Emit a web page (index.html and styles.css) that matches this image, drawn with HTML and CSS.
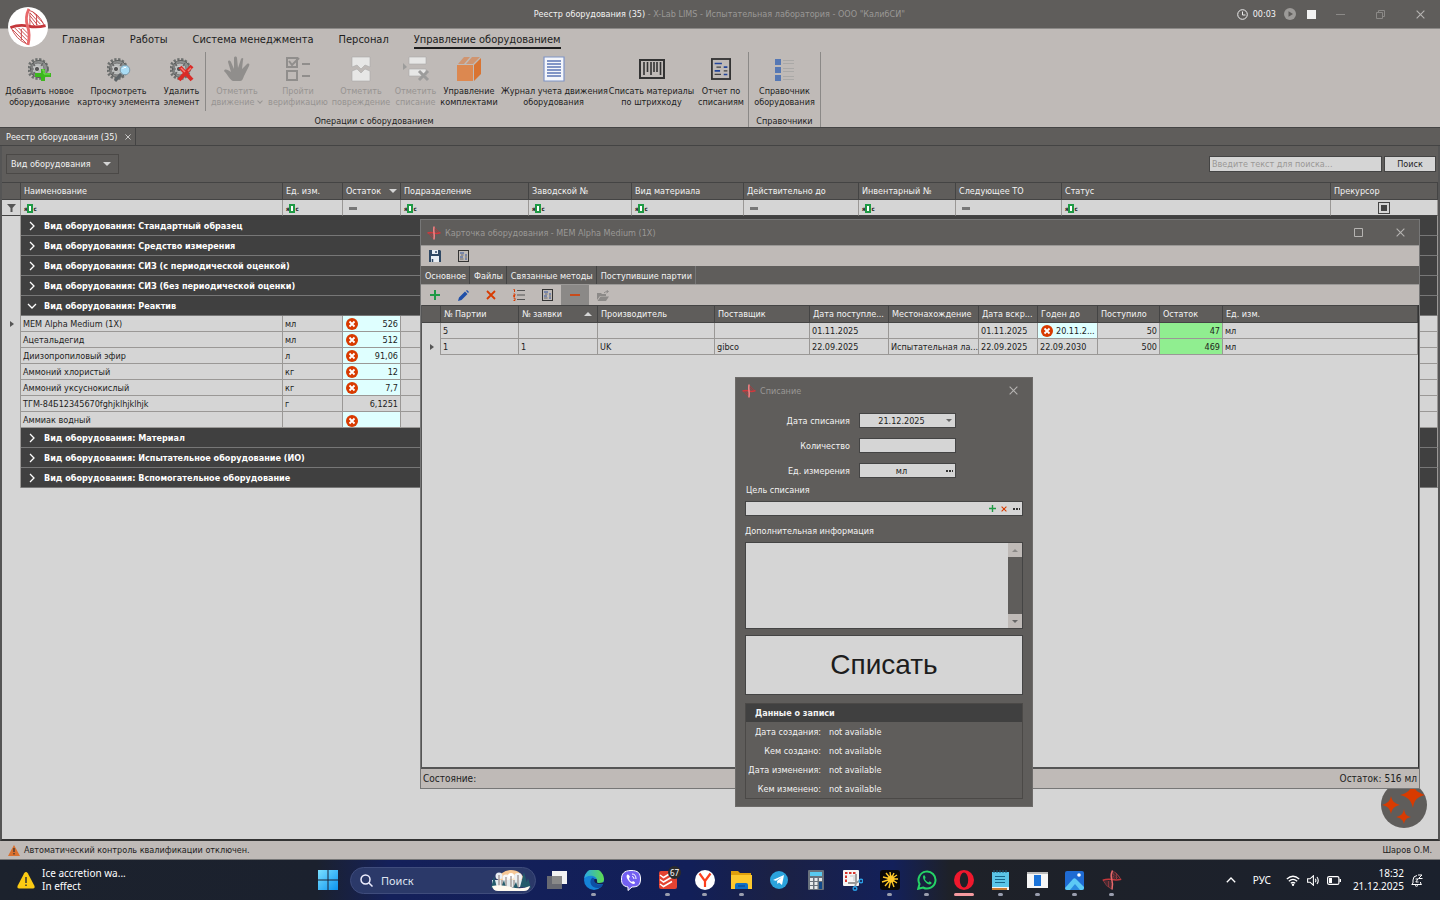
FILE: index.html
```html
<!DOCTYPE html>
<html lang="ru">
<head>
  <meta charset="UTF-8"/>
  <meta name="viewport" content="width=device-width, initial-scale=1.0"/>
  <title>Реестр оборудования (35) - X-Lab LIMS</title>
  <link rel="stylesheet" href="styles.css">
</head>
<body>

  <!-- Shared icons -->
  <svg class="sprite" aria-hidden="true">
    <symbol id="dna" viewBox="0 0 40 40">
      <path d="M20 2Q31 5 37 18M22 5V18M22 5 33 17M22 8 30 18M22 12 27 19M25 4 36 16M29 7V18M2 20Q7 33 19 38M6 21 20 35M10 21 20 31M14 21 20 27M4 23 18 37M13 22V34" stroke="#c9474a" stroke-width="1" fill="none"/>
      <path d="M1.500 20.500Q11 17 20 19T38.500 18.500" fill="none" stroke="#c4373b" stroke-width="3"/>
      <path d="M21 1Q16.500 10 19.500 19T20 39" fill="none" stroke="#e8696b" stroke-width="3"/>
    </symbol>
    <symbol id="dna-small" viewBox="0 0 14 14">
      <path d="M7 1 13 7M8 4 11 7M1 7 7 13M3 7 6 10" stroke="#b0393c" stroke-width=".8" fill="none"/>
      <path d="M.5 7Q4 6 7 7T13.500 6.500" fill="none" stroke="#d0393d" stroke-width="1.500"/>
      <path d="M7 .5Q6.500 4 7 7T7 13.500" fill="none" stroke="#f08082" stroke-width="1.600"/>
    </symbol>
    <symbol id="gear" viewBox="0 0 24 26">
      <circle cx="10" cy="13" r="9.5" fill="none" stroke="#6c6f6e" stroke-width="3" stroke-dasharray="2.2 1.6"/>
      <circle cx="11" cy="13" r="8.6" fill="#8d908f" stroke="#5e6160"/>
      <circle cx="10" cy="13" r="6" fill="#b9bcbb" stroke="#777" stroke-width="1"/>
      <circle cx="9" cy="13" r="2.6" fill="#555" stroke="#ddd" stroke-width=".8"/>
      <path d="M5 7 7 10M15 7 13 10M5 19 7 16M3 13H6" stroke="#666" stroke-width="1.2"/>
    </symbol>
    <symbol id="err" viewBox="0 0 12 12">
      <circle cx="6" cy="6" r="6" fill="#d83b01"/>
      <path d="M3.5 3.5 8.5 8.5M8.5 3.5 3.5 8.5" stroke="#fff" stroke-width="1.8"/>
    </symbol>
    <symbol id="report" viewBox="0 0 22 24">
      <rect x="1" y="1" width="20" height="22" fill="none" stroke="#333" stroke-width="2"/>
      <path d="M4 6H12M14 10H18M4 14H10M14 18H18" stroke="#23459a" stroke-width="1.8"/>
      <path d="M6 10H11M14 14H18M4 18H11" stroke="#444" stroke-width="1.4"/>
    </symbol>
    <symbol id="close" viewBox="0 0 10 10"><path d="M.7.7 9.3 9.3M9.3.7.7 9.3" stroke="currentColor" stroke-width="1.2" fill="none"/></symbol>
    <symbol id="right" viewBox="0 0 10 10"><path d="M3 1 7 5 3 9" stroke="#fff" stroke-width="1.3" fill="none"/></symbol>
    <symbol id="down" viewBox="0 0 10 10"><path d="M1 3 5 7 9 3" stroke="#fff" stroke-width="1.3" fill="none"/></symbol>
    <symbol id="plus" viewBox="0 0 10 10"><path d="M5 0V10M0 5H10" stroke="#1f9a45" stroke-width="2"/></symbol>
    <symbol id="cross" viewBox="0 0 10 10"><path d="M1 1 9 9M9 1 1 9" stroke="#d83b01" stroke-width="1.8"/></symbol>
  </svg>

  <header class="titlebar">
    <span class="title"><b>Реестр оборудования (35)</b> - X-Lab LIMS - Испытательная лаборатория - ООО "КалибСИ"</span>
    <div class="timer">
      <svg width="11" height="11" viewBox="0 0 11 11"><circle cx="5.5" cy="5.5" r="4.8" fill="none" stroke="#eee"/><path d="M5.500 2.500V6H8.500" fill="none" stroke="#eee"/></svg>
      <span>00:03</span>
      <button aria-label="Старт"><svg width="12" height="12" viewBox="0 0 12 12"><circle cx="6" cy="6" r="6" fill="#9c9a98"/><path d="M4.500 3.200 9 6 4.500 8.800Z" fill="#5f5d5b"/></svg></button>
      <button aria-label="Стоп"><svg width="9" height="9" viewBox="0 0 9 9"><path d="M0 0H9V9H0Z" fill="#f3f3f3"/></svg></button>
    </div>
    <div class="winbtns">
      <button aria-label="Свернуть"><svg width="9" height="9" viewBox="0 0 9 9"><path d="M0 4.500H9" stroke="#8b8987"/></svg></button>
      <button aria-label="Развернуть"><svg width="9" height="9" viewBox="0 0 9 9"><path d="M.5 2.500H6.500V8.500H.5ZM2.500 2.500V.5H8.500V6.500H6.500" fill="none" stroke="#8b8987"/></svg></button>
      <button aria-label="Закрыть"><svg width="9" height="9"><use href="#close"/></svg></button>
    </div>
    <div class="logo"><svg width="38" height="38"><use href="#dna"/></svg></div>
  </header>

  <nav class="tabs">
    <a href="#">Главная</a>
    <a href="#">Работы</a>
    <a href="#">Система менеджмента</a>
    <a href="#">Персонал</a>
    <a href="#" class="active">Управление оборудованием</a>
  </nav>

  <section class="ribbon">
    <div class="group">
      <div class="items">
        <button class="item w-add">
          <svg width="24" height="26" viewBox="0 0 24 26"><use href="#gear"/><path d="M13 13H17V17H23V21H17V25H13V21H7V17H13Z" fill="#3db81e"/><path d="M14 14H16V18H22" stroke="#7de05a" fill="none"/></svg>
          Добавить новое<br>оборудование
        </button>
        <button class="item w-view">
          <svg width="24" height="26" viewBox="0 0 24 26"><use href="#gear"/><path d="M14 18 8 25" stroke="#5d6468" stroke-width="3"/><circle cx="18" cy="14" r="4.800" fill="#a9dcf4" stroke="#7f9aa8"/><path d="M15.500 13A3 3 0 0 1 19 11.500" stroke="#fff" fill="none"/></svg>
          Просмотреть<br>карточку элемента
        </button>
        <button class="item w-del">
          <svg width="24" height="26" viewBox="0 0 24 26"><use href="#gear"/><path d="M10 11 22 24M22 10 9 24" stroke="#d92b27" stroke-width="4"/><path d="M11 12 15 16M21 12 18 15" stroke="#f57a72" stroke-width="1.500"/></svg>
          Удалить<br>элемент
        </button>
        <span class="sep"></span>
        <button class="item w-move" disabled>
          <svg width="28" height="26" viewBox="0 0 28 26"><path d="M10 25C7 24 5 19 1 15 2 12 5 14 8 16L5 6C5 4 7 4 8 6L11 13 11 2C11 0 14 0 14 2L15 12 18 3C19 1 21 2 20 4L19 13 24 8C26 7 27 8 26 10L21 20C20 23 19 25 17 25Z" fill="#8c8a88"/></svg>
          Отметить<br>движение <i class="chev"></i>
        </button>
        <button class="item w-ver" disabled>
          <svg width="26" height="26" viewBox="0 0 26 26"><path d="M2 2H12V11H2ZM2 15H12V24H2Z" fill="none" stroke="#8c8a88" stroke-width="2"/><path d="M4 5 7 9 14 2M17 8H25M17 20H25" fill="none" stroke="#8c8a88" stroke-width="2"/></svg>
          Пройти<br>верификацию
        </button>
        <button class="item w-dmg" disabled>
          <svg width="22" height="26" viewBox="0 0 22 26"><path d="M2 1H20V11L15 9 11 13 7 9 2 11Z" fill="#ececec" stroke="#aaa" stroke-width=".6"/><path d="M2 25H20V15L15 13 11 17 7 13 2 15Z" fill="#ececec" stroke="#aaa" stroke-width=".6"/></svg>
          Отметить<br>повреждение
        </button>
        <button class="item w-off" disabled>
          <svg width="28" height="26" viewBox="0 0 28 26"><path d="M7 1H24V8H7ZM7 13H24V20H7Z" fill="#ececec" stroke="#aaa" stroke-width=".6"/><path d="M1 7 5 11 1 14Z" fill="#999"/><path d="M17 15 26 24M26 15 17 24" stroke="#999" stroke-width="3"/></svg>
          Отметить<br>списание
        </button>
        <button class="item w-kit">
          <svg width="26" height="26" viewBox="0 0 26 26"><path d="M1 9H17V25H1Z" fill="#dc8850"/><path d="M18 9 25 2V18L18 25Z" fill="#d97432"/><path d="M2 8 8 1H14L8 8ZM10 8 16 1H24L17 8Z" fill="#d09570"/></svg>
          Управление<br>комплектами
        </button>
        <button class="item w-log">
          <svg width="22" height="26" viewBox="0 0 22 26"><path d="M1 1H21V25H1Z" fill="#f4f6fb" stroke="#7f93c6" stroke-width="1.200"/><path d="M4 5H18M4 8H18M4 11H18M4 14H18M4 17H18M4 20H18" stroke="#5b76b5" stroke-width="1.500"/></svg>
          Журнал учета движения<br>оборудования
        </button>
        <button class="item w-bar">
          <svg width="26" height="26" viewBox="0 0 26 26"><path d="M1 4H25V22H1Z" fill="none" stroke="#333" stroke-width="2"/><path d="M5 6V19M8.500 6V16M12 6V19M15 6V16M18 6V16M21.500 6V19" stroke="#333" stroke-width="1.600"/></svg>
          Списать материалы<br>по штрихкоду
        </button>
        <button class="item w-rep">
          <svg width="20" height="26" viewBox="0 -1 22 26"><use href="#report" width="22" height="24"/></svg>
          Отчет по<br>списаниям
        </button>
      </div>
      <div class="caption">Операции с оборудованием</div>
    </div>
    <div class="group">
      <div class="items">
        <button class="item w-ref">
          <svg width="20" height="26" viewBox="0 0 20 26"><path d="M0 3H6V9H0ZM0 11H6V17H0ZM0 19H6V25H0Z" fill="#5678b4"/><path d="M8 4.500H19M8 7.500H19M8 12.500H19M8 15.500H19M8 20.500H19M8 23.500H19" stroke="#aaa9a7"/></svg>
          Справочник<br>оборудования
        </button>
      </div>
      <div class="caption">Справочники</div>
    </div>
  </section>

  <div class="doctabs">
    <div class="doctab">Реестр оборудования (35) <button aria-label="Закрыть вкладку"><svg width="6" height="6"><use href="#close"/></svg></button></div>
  </div>

  <main class="registry">
    <div class="searchbar">
      <select class="kind" aria-label="Группировка"><option>Вид оборудования</option></select>
      <input class="find" type="text" placeholder="Введите текст для поиска..." aria-label="Поиск">
      <button class="go">Поиск</button>
    </div>

    <table class="grid main-grid">
      <colgroup>
        <col class="c19"><col class="c262"><col class="c60"><col class="c58"><col class="c128"><col class="c103">
        <col class="c112"><col class="c115"><col class="c97"><col class="c106"><col><col class="c107">
      </colgroup>
      <thead>
        <tr>
          <th></th><th>Наименование</th><th>Ед. изм.</th><th>Остаток <i class="tri"></i></th><th>Подразделение</th><th>Заводской №</th>
          <th>Вид материала</th><th>Действительно до</th><th>Инвентарный №</th><th>Следующее ТО</th><th>Статус</th><th>Прекурсор</th>
        </tr>
        <tr class="filter">
          <td class="mark"><svg width="9" height="8" viewBox="0 0 9 8"><path d="M0 0H9L5.500 4V8H3.500V4Z" fill="#555"/></svg></td>
          <td><span class="abc">я<i></i>с</span></td>
          <td><span class="abc">я<i></i>с</span></td>
          <td><span class="eq"></span></td>
          <td><span class="abc">я<i></i>с</span></td>
          <td><span class="abc">я<i></i>с</span></td>
          <td><span class="abc">я<i></i>с</span></td>
          <td><span class="eq"></span></td>
          <td><span class="abc">я<i></i>с</span></td>
          <td><span class="eq"></span></td>
          <td><span class="abc">я<i></i>с</span></td>
          <td class="mid"><input type="checkbox" class="tri-check" aria-label="Прекурсор"></td>
        </tr>
      </thead>
      <tbody>
        <tr class="grp"><td></td><td colspan="11"><svg width="10" height="10"><use href="#right"/></svg>Вид оборудования: Стандартный образец</td></tr>
        <tr class="grp"><td></td><td colspan="11"><svg width="10" height="10"><use href="#right"/></svg>Вид оборудования: Средство измерения</td></tr>
        <tr class="grp"><td></td><td colspan="11"><svg width="10" height="10"><use href="#right"/></svg>Вид оборудования: СИЗ (с периодической оценкой)</td></tr>
        <tr class="grp"><td></td><td colspan="11"><svg width="10" height="10"><use href="#right"/></svg>Вид оборудования: СИЗ (без периодической оценки)</td></tr>
        <tr class="grp"><td></td><td colspan="11"><svg width="10" height="10"><use href="#down"/></svg>Вид оборудования: Реактив</td></tr>
        <tr><td class="mark"><i class="cur"></i></td><td>MEM Alpha Medium (1X)</td><td>мл</td><td class="num low"><svg width="12" height="12"><use href="#err"/></svg>526</td><td></td><td></td><td></td><td></td><td></td><td></td><td></td><td></td></tr>
        <tr><td></td><td>Ацетальдегид</td><td>мл</td><td class="num low"><svg width="12" height="12"><use href="#err"/></svg>512</td><td></td><td></td><td></td><td></td><td></td><td></td><td></td><td></td></tr>
        <tr><td></td><td>Диизопропиловый эфир</td><td>л</td><td class="num low"><svg width="12" height="12"><use href="#err"/></svg>91,06</td><td></td><td></td><td></td><td></td><td></td><td></td><td></td><td></td></tr>
        <tr><td></td><td>Аммоний хлористый</td><td>кг</td><td class="num low"><svg width="12" height="12"><use href="#err"/></svg>12</td><td></td><td></td><td></td><td></td><td></td><td></td><td></td><td></td></tr>
        <tr><td></td><td>Аммоний уксуснокислый</td><td>кг</td><td class="num low"><svg width="12" height="12"><use href="#err"/></svg>7,7</td><td></td><td></td><td></td><td></td><td></td><td></td><td></td><td></td></tr>
        <tr><td></td><td>ТГМ-84Б12345670fghjklhjklhjk</td><td>г</td><td class="num">6,1251</td><td></td><td></td><td></td><td></td><td></td><td></td><td></td><td></td></tr>
        <tr><td></td><td>Аммиак водный</td><td></td><td class="num low"><svg width="12" height="12"><use href="#err"/></svg></td><td></td><td></td><td></td><td></td><td></td><td></td><td></td><td></td></tr>
        <tr class="grp"><td></td><td colspan="11"><svg width="10" height="10"><use href="#right"/></svg>Вид оборудования: Материал</td></tr>
        <tr class="grp"><td></td><td colspan="11"><svg width="10" height="10"><use href="#right"/></svg>Вид оборудования: Испытательное оборудование (ИО)</td></tr>
        <tr class="grp"><td></td><td colspan="11"><svg width="10" height="10"><use href="#right"/></svg>Вид оборудования: Вспомогательное оборудование</td></tr>
      </tbody>
    </table>

    <button class="assist" aria-label="Помощник">
      <svg width="46" height="46" viewBox="0 0 46 46"><path d="M32 0C33 8 36 10 44 13 36 15 33 18 32 26 30 18 27 15 19 13 27 11 30 8 32 0ZM10 14C11 19 13 21 19 23 13 24 11 27 10 32 9 27 7 24 1 23 7 21 9 19 10 14ZM23 27C24 32 25 34 30 35 25 36 24 38 23 42 22 38 20 36 15 35 20 34 22 32 23 27Z" fill="#d83b01"/></svg>
    </button>
  </main>

  <footer class="statusbar">
    <svg width="12" height="11" viewBox="0 0 12 11"><path d="M6 0 12 11H0Z" fill="#d9702f"/><path d="M6 3V7M6 8V9.500" stroke="#333" stroke-width="1.200"/></svg>
    <span>Автоматический контроль квалификации отключен.</span>
    <span class="user">Шаров О.М.</span>
  </footer>

  <!-- Equipment card window -->
  <section class="window card">
    <div class="wintitle">
      <svg width="14" height="14"><use href="#dna-small"/></svg>
      <span>Карточка оборудования - MEM Alpha Medium (1X)</span>
      <button aria-label="Развернуть"><svg width="9" height="9" viewBox="0 0 9 9"><path d="M.5.5H8.500V8.500H.5Z" fill="none" stroke="currentColor"/></svg></button>
      <button aria-label="Закрыть"><svg width="9" height="9"><use href="#close"/></svg></button>
    </div>
    <div class="toolbar top">
      <button aria-label="Сохранить"><svg width="12" height="12" viewBox="0 0 12 12"><path d="M0 0H11L12 1V12H0Z" fill="#2f4864"/><path d="M3 0H9V4H3ZM2 6H10V12H2Z" fill="#e9eef4"/><path d="M7 1V3M3.500 9V12" stroke="#2f4864" stroke-width="1.500"/></svg></button>
      <button aria-label="Отчет"><svg width="11" height="12"><use href="#report"/></svg></button>
    </div>
    <div class="cardtabs">
      <button>Основное</button><button>Файлы</button><button>Связанные методы</button><button class="active">Поступившие партии</button>
    </div>
    <div class="toolbar">
      <button aria-label="Добавить"><svg width="10" height="10"><use href="#plus"/></svg></button>
      <button aria-label="Изменить"><svg width="11" height="11" viewBox="0 0 11 11"><path d="M0 11 1 7.500 7 1.500 9.500 4 3.500 10ZM8 .8 9 0 11 2 10 3Z" fill="#1f4fa8"/></svg></button>
      <button aria-label="Удалить"><svg width="10" height="10"><use href="#cross"/></svg></button>
      <button aria-label="Нумерация"><svg width="12" height="12" viewBox="0 0 12 12"><path d="M4 1.500H12M4 6H12M4 10.500H12" stroke="#555"/><path d="M.5.500H1.500V3M.5 5H2V6.500H.5V7.500H2M.5 9H2V11.500H.5" fill="none" stroke="#d83b01"/></svg></button>
      <button aria-label="Отчет"><svg width="11" height="12"><use href="#report"/></svg></button>
      <button class="pressed" aria-label="Списать"><svg width="12" height="12" viewBox="0 0 12 12"><path d="M1 6H11" stroke="#d83b01" stroke-width="1.600"/></svg></button>
      <button disabled aria-label="Открыть"><svg width="13" height="11" viewBox="0 0 13 11"><path d="M0 3H4L5 4H9V6H3L0 10ZM3.500 6.500H12L9 11H.5Z" fill="#8c8a88"/><path d="M7 3Q8 1.500 11 1.500M9.500 0 11.500 1.500 9.500 3" fill="none" stroke="#8c8a88"/></svg></button>
    </div>
    <div class="sheet">
      <table class="grid">
        <colgroup>
          <col class="c19"><col class="c78"><col class="c79"><col class="c117"><col class="c95"><col class="c79"><col class="c90">
          <col class="c59"><col class="c60"><col class="c62"><col class="c63"><col>
        </colgroup>
        <thead>
          <tr>
            <th></th><th>№ Партии</th><th>№ заявки <i class="tri up"></i></th><th>Производитель</th><th>Поставщик</th><th>Дата поступле...</th><th>Местонахождение</th>
            <th>Дата вскр...</th><th>Годен до</th><th>Поступило</th><th>Остаток</th><th>Ед. изм.</th>
          </tr>
        </thead>
        <tbody>
          <tr><td></td><td>5</td><td></td><td></td><td></td><td>01.11.2025</td><td></td><td>01.11.2025</td><td class="low"><svg width="12" height="12"><use href="#err"/></svg>20.11.2...</td><td class="num">50</td><td class="num rest">47</td><td>мл</td></tr>
          <tr><td class="mark"><i class="cur"></i></td><td>1</td><td>1</td><td>UK</td><td>gibco</td><td>22.09.2025</td><td>Испытательная ла...</td><td>22.09.2025</td><td>22.09.2030</td><td class="num">500</td><td class="num rest">469</td><td>мл</td></tr>
        </tbody>
      </table>
    </div>
    <div class="cardstatus"><span>Состояние:</span><span>Остаток: 516 мл</span></div>
  </section>

  <!-- Write-off dialog -->
  <form class="window dialog">
    <div class="wintitle">
      <svg width="14" height="14"><use href="#dna-small"/></svg>
      <span>Списание</span>
      <button type="button" aria-label="Закрыть"><svg width="9" height="9"><use href="#close"/></svg></button>
    </div>
    <div class="fields">
      <label for="date">Дата списания</label>
      <div class="box"><input id="date" type="text" value="21.12.2025"><button type="button" aria-label="Календарь"><i class="tri small"></i></button></div>
      <label for="qty">Количество</label>
      <div class="box"><input id="qty" type="text"></div>
      <label for="unit">Ед. измерения</label>
      <div class="box"><input id="unit" type="text" value="мл"><button type="button" aria-label="Выбрать"><i class="dots"></i></button></div>
    </div>
    <label class="above" for="goal">Цель списания</label>
    <div class="box goal">
      <input id="goal" type="text">
      <button type="button" aria-label="Добавить"><svg width="7" height="7"><use href="#plus"/></svg></button>
      <button type="button" aria-label="Очистить"><svg width="6" height="6"><use href="#cross"/></svg></button>
      <button type="button" aria-label="Выбрать"><i class="dots"></i></button>
    </div>
    <label class="above info" for="info">Дополнительная информация</label>
    <div class="memo">
      <textarea id="info"></textarea>
      <div class="scroll">
        <button type="button" aria-label="Вверх"><i class="tri small up"></i></button>
        <button type="button" aria-label="Вниз"><i class="tri small"></i></button>
      </div>
    </div>
    <button type="button" class="submit">Списать</button>
    <div class="record">
      <h2>Данные о записи</h2>
      <dl>
        <dt>Дата создания:</dt><dd>not available</dd>
        <dt>Кем создано:</dt><dd>not available</dd>
        <dt>Дата изменения:</dt><dd>not available</dd>
        <dt>Кем изменено:</dt><dd>not available</dd>
      </dl>
    </div>
  </form>

  <!-- Taskbar -->
  <div class="taskbar">
    <div class="weather">
      <svg width="18" height="17" viewBox="0 0 18 17"><path d="M9 0Q10 0 10.800 1.200L17.500 14Q18 16.500 16 16.500H2Q0 16.500.5 14L7.200 1.200Q8 0 9 0Z" fill="#fccb13"/><path d="M9 5V11M9 12.500V14" stroke="#333" stroke-width="1.500"/></svg>
      <div><b>Ice accretion wa...</b><span>In effect</span></div>
    </div>
    <div class="apps">
      <button aria-label="Пуск"><svg width="20" height="20" viewBox="0 0 20 20"><defs><linearGradient id="win" x2="1" y2="1"><stop stop-color="#7be0ff"/><stop offset="1" stop-color="#0a93f0"/></linearGradient></defs><path d="M0 0H9.500V9.500H0ZM10.500 0H20V9.500H10.500ZM0 10.500H9.500V20H0ZM10.500 10.500H20V20H10.500Z" fill="url(#win)"/></svg></button>
      <label class="search">
        <svg width="13" height="13" viewBox="0 0 13 13"><circle cx="5.500" cy="5.500" r="4.500" fill="none" stroke="#eef" stroke-width="1.500"/><path d="M9 9 12.500 12.500" stroke="#eef" stroke-width="1.500"/></svg>
        <input type="text" placeholder="Поиск" aria-label="Поиск">
        <svg width="40" height="23" viewBox="0 0 40 23"><path d="M7 12A13 11 0 0 1 33 12V17H7Z" fill="#f6c795"/><circle cx="20" cy="11" r="6" fill="#fce7cb"/><circle cx="8" cy="7" r="3.500" fill="#e9eef3"/><circle cx="15" cy="9" r="3.500" fill="#f6f6f6"/><circle cx="20" cy="7" r="3" fill="#fff"/><circle cx="27" cy="8" r="4" fill="#eef1f4"/><path d="M1 11H32V18H1Z" fill="#e3ebee"/><path d="M8 19V6M15 19V8M20 19V7M27 19V6M11 19V11M23 19V11" stroke="#857775" stroke-width="1"/><path d="M3 7 6 19H0ZM13 11 15 19H10ZM33 3 37 18H29ZM37 9 40 19H34ZM25 13 27 19H22Z" fill="#235b6b"/><path d="M1 17Q10 15 20 18T39 17Q38 22 33 22H7Q2 22 1 17Z" fill="#fffaf0"/></svg>
      </label>
      <button aria-label="Представление задач"><svg width="20" height="20" viewBox="0 0 20 20"><path d="M5 1H20V14H5Z" fill="#f2f2f2"/><path d="M0 6H15V19H0Z" fill="#777" opacity=".85"/></svg></button>
      <button class="run" aria-label="Edge"><svg width="20" height="20" viewBox="0 0 20 20"><defs><linearGradient id="edge" x2="1"><stop stop-color="#29a8e8"/><stop offset="1" stop-color="#5fdc4c"/></linearGradient></defs><circle cx="10" cy="10" r="10" fill="#1583d8"/><path d="M0 9A10 10 0 0 1 20 9C20 13 16 15 12 13 14 11 13 7 9 6 5 5 1 7 0 9Z" fill="url(#edge)"/><path d="M8 8C4 12 8 19 15 18 18 17 19 14 19 14 15 16 11 14 12 11 11 9 9 7 8 8Z" fill="#0d4fa5"/><path d="M10.500 9C9 12 13 15.500 18.500 14L21 16V12L15.500 13C11.500 13 14 11 12.500 9Z" fill="#151f52"/></svg></button>
      <button aria-label="Viber"><svg width="20" height="21" viewBox="0 0 20 21"><path d="M10 .5C17 .5 19.500 3 19.500 9S17 17 11 17L7 20.500V17C2 16 .5 14 .5 9S3 .5 10 .5Z" fill="#7360f2" stroke="#fff"/><path d="M6 5C4 7 9 14 13 14 15 13 14 12 12 11L11 12C9 11 8 10 8 8L9 7C8 5 7 4 6 5Z" fill="#fff"/><path d="M11 4Q15 4 15 9M11 6.500Q13 6.500 13 9" stroke="#fff" fill="none"/></svg></button>
      <button class="run" aria-label="Todoist"><svg width="18" height="18" viewBox="0 0 18 18"><rect width="18" height="18" rx="2" fill="#e44332"/><path d="M1 4 4.500 6.500 12 2M1 8.500 4.500 11 13 6M1 13 4.500 15.500 13 10.500" stroke="#fff" stroke-width="1.500" fill="none"/></svg><span class="badge">67</span></button>
      <button class="run" aria-label="Yandex"><svg width="20" height="20" viewBox="0 0 20 20"><circle cx="10" cy="10" r="10" fill="#fff"/><path d="M4.500 3.500 10 11V17M15.500 3.500 10 11" stroke="#fc3f1d" stroke-width="2.200" fill="none"/></svg></button>
      <button class="run" aria-label="Проводник"><svg width="21" height="20" viewBox="0 0 21 20"><path d="M0 1H7L9 3H20V8H0Z" fill="#e0a00c"/><path d="M0 5H21V19H0Z" fill="#fdc92e"/><path d="M4 19V15Q4 13 6 13H15Q17 13 17 15V19Z" fill="#0f6fc5"/><path d="M7 16H14" stroke="#073f86"/></svg></button>
      <button aria-label="Telegram"><svg width="18" height="18" viewBox="0 0 18 18"><circle cx="9" cy="9" r="9" fill="#2ba3dc"/><path d="M3 9 14 4 12 14 9 11.500 7.500 13 7 10 12 6 6 9.800Z" fill="#fff"/></svg></button>
      <button aria-label="Калькулятор"><svg width="16" height="20" viewBox="0 0 16 20"><rect width="16" height="20" rx="1" fill="#68717c"/><path d="M2 2H14V6H2Z" fill="#58c9ef"/><path d="M2 8H5V11H2ZM6.500 8H9.500V11H6.500ZM2 12H5V15H2ZM6.500 12H9.500V15H6.500ZM2 16H5V19H2ZM6.500 16H9.500V19H6.500ZM11 8H14V11H11Z" fill="#e6e9ec"/><path d="M11 12H14V19H11Z" fill="#124a8c"/></svg></button>
      <button aria-label="Ножницы"><svg width="20" height="21" viewBox="0 0 20 21"><rect width="16" height="16" rx="1" fill="#f5f5f5"/><path d="M3 12V3H13" stroke="#d8322a" stroke-width="2" stroke-dasharray="2.500 1.500" fill="none"/><path d="M7 6H11V11" stroke="#ddd" stroke-width="2" fill="none"/><path d="M13 4V13L16 11M5 13H13L12 17" stroke="#999" stroke-width="1.800" fill="none"/><circle cx="18" cy="11" r="1.800" fill="none" stroke="#2a9fe6" stroke-width="1.400"/><circle cx="12" cy="18.500" r="1.800" fill="none" stroke="#2a9fe6" stroke-width="1.400"/></svg></button>
      <button class="run" aria-label="Солнце"><svg width="20" height="20" viewBox="0 0 20 20"><rect width="20" height="20" rx="3" fill="#080808"/><path d="M11 9 3 7M11 9 6 3M11 9 10 2M11 9 14 3M11 9 17 5M11 9 18 9M11 9 17 13M11 9 14 17M11 9 9 18M11 9 5 16M11 9 2 12" stroke="#ffc928" stroke-width="1.400"/><circle cx="11" cy="9" r="3.500" fill="#ffc928"/></svg></button>
      <button class="run" aria-label="WhatsApp"><svg width="20" height="20" viewBox="0 0 20 20"><path d="M1.200 18.800 2.500 14A8.500 8.500 0 1 1 6 17.500Z" fill="none" stroke="#25d366" stroke-width="2"/><path d="M6.500 5.500C4.500 8 9 14.500 13 14.500 15.500 13.500 15 12.500 12.500 11.300L11.500 12.500C9.500 11.700 8.500 10.500 7.800 9L8.600 8C8 5.500 7.500 5 6.500 5.500Z" fill="#25d366"/></svg></button>
      <button class="run active" aria-label="Opera"><svg width="20" height="20" viewBox="0 0 20 20"><ellipse cx="10" cy="10" rx="10" ry="10" fill="#f0182d"/><ellipse cx="10" cy="10" rx="4.200" ry="7.500" fill="#1f2127"/></svg></button>
      <button class="run" aria-label="Блокнот"><svg width="17" height="20" viewBox="0 0 17 20"><path d="M0 2H17V17H0Z" fill="#5bc6e8"/><path d="M0 17H17V20H0Z" fill="#f3f3f3"/><path d="M0 20H15V18H0Z" fill="#c77a2f"/><path d="M3 6.500H13M3 9.500H13M3 12.500H13" stroke="#16668a" stroke-width="1.200"/><path d="M2 0V3M5 0V3M8 0V3M11 0V3M14 0V3" stroke="#1c5d78"/></svg></button>
      <button class="run" aria-label="Окно"><svg width="21" height="16" viewBox="0 0 21 16"><path d="M0 0H21V16H0Z" fill="#f6f6f6"/><path d="M0 0H21V2H0Z" fill="#bbb"/><path d="M7 3H14V14H7Z" fill="#1a73d9"/></svg></button>
      <button class="run" aria-label="Фотографии"><svg width="19" height="19" viewBox="0 0 19 19"><rect width="19" height="19" rx="2" fill="#1f6bd3"/><path d="M0 17 8 8Q9.500 6.500 11 8L19 16V17Q19 19 17 19H2Q0 19 0 17Z" fill="#5cc9f5"/><path d="M5 19 10 13 15 19Z" fill="#2a8be0"/><circle cx="14" cy="4" r="1.800" fill="#fff"/></svg></button>
      <button class="run" aria-label="X-Lab"><svg width="20" height="20"><use href="#dna"/></svg></button>
    </div>
    <div class="tray">
      <svg width="10" height="6" viewBox="0 0 10 6"><path d="M.8 5.200 5 1 9.200 5.200" fill="none" stroke="#fff" stroke-width="1.300"/></svg>
      <span class="lang">РУС</span>
      <svg width="14" height="11" viewBox="0 0 14 11"><path d="M.8 4Q7-1.500 13.200 4M2.800 6.200Q7 2.500 11.200 6.200M4.800 8.300Q7 6.300 9.200 8.300" fill="none" stroke="#fff" stroke-width="1.200"/><circle cx="7" cy="9.800" r="1.200" fill="#fff"/></svg>
      <svg width="13" height="11" viewBox="0 0 13 11"><path d="M.6 3.800H3L6.400.8V10.200L3 7.200H.6ZM8.300 3.800Q9.500 5.500 8.300 7.200M10 2Q12.500 5.500 10 9" fill="none" stroke="#fff" stroke-width="1.100"/></svg>
      <svg width="14" height="9" viewBox="0 0 14 9"><rect x=".6" y=".6" width="11.300" height="7.800" rx="1.500" fill="none" stroke="#fff" stroke-width="1.200"/><path d="M2 2H5V7H2ZM12.500 3H14V6H12.500Z" fill="#fff"/></svg>
      <div class="clock"><span>18:32</span><span>21.12.2025</span></div>
      <svg width="12" height="13" viewBox="0 0 12 13"><path d="M6 1.500Q2 2 2 6V9L.8 10.500H10.500L9.500 9V8M4 11.500Q5.500 13 7 11.500M7 1H11L7.500 4.500H11.500M4.500 5H7L4.800 8H7.500" fill="none" stroke="#fff"/></svg>
    </div>
  </div>

</body>
</html>
```

FILE: styles.css
```css
* {
  box-sizing: border-box;
  margin: 0; padding: 0;
}

body {
  position: relative;
  display: flex;
  flex-direction: column;
  height: 100vh;
  overflow: hidden;
  background: #5f5d5b;
  color: #1d1d1d;
  font: 9px/12px "DejaVu Sans Condensed", "Noto Sans", sans-serif;
}

button, input, select, textarea {
  font: inherit;
  color: inherit;
  background: none;
  border: none;
  outline: none;
  border-radius: 0;
}

svg { display: block; flex: none; }
.sprite { position: absolute; width: 0; height: 0; }

/* Title bar */
.titlebar {
  position: relative;
  display: flex;
  align-items: center;
  justify-content: flex-end;
  height: 29px;
  flex: none;
  color: #9a9896;
  border-bottom: 1px solid #8b8987;
}

.title { flex: 1; text-align: center; padding-left: 202px; }
.title b { color: #f3f3f3; font-weight: normal; }
.timer { display: flex; align-items: center; gap: 7px; color: #f3f3f3; margin-right: 4px; }
.timer span { margin: 0 1px 0 -2px; }
.timer button + button { margin-left: 4px; }
.winbtns { display: flex; color: #b5b3b1; }
.winbtns button { width: 40px; display: flex; justify-content: center; }

.logo {
  position: absolute;
  left: 8px; top: 7px;
  width: 40px; height: 40px;
  padding: 1px;
  border-radius: 50%;
  background: #fff;
}

/* Ribbon */
.tabs {
  display: flex;
  gap: 25px;
  height: 23px;
  flex: none;
  padding: 3px 62px 0;
  background: #bfbab7;
  font-size: 11px;
  line-height: 16px;
}

.tabs a { color: #1d1d1d; text-decoration: none; height: 17px; }
.tabs .active { border-bottom: 2px solid #1d1d1d; }

.ribbon {
  display: flex;
  height: 76px;
  flex: none;
  background: #bfbab7;
  border-bottom: 1px solid #444;
}

.group { display: flex; flex-direction: column; border-right: 1px solid #8b8987; padding: 0 3px; }
.items { display: flex; align-items: flex-start; }
.item {
  display: flow-root;
  padding: 4px 0 0;
  line-height: 11px;
  text-align: center;
  white-space: nowrap;
}
.item svg { margin: 0 auto 4px; }
.item:disabled { color: #979492; }
.item:disabled svg { opacity: .9; }
.sep { width: 1px; height: 59px; margin-left: 3px; background: #8b8987; }
.chev { display: inline-block; width: 4px; height: 4px; border: solid #979492; border-width: 0 1px 1px 0; transform: rotate(45deg); margin: 0 1px 2px; }
.caption { text-align: center; line-height: 12px; margin-top: auto; }

.w-add { width: 73px; } .w-view { width: 85px; } .w-del { width: 41px; }
.w-move { width: 62px; } .w-ver { width: 60px; } .w-dmg { width: 66px; }
.w-off { width: 43px; } .w-kit { width: 64px; } .w-log { width: 105px; }
.w-bar { width: 91px; } .w-rep { width: 48px; } .w-ref { width: 65px; }

/* Document tabs */
.doctabs { height: 18px; flex: none; border-bottom: 1px solid #444; color: #f3f3f3; display: flex; }
.doctab { display: flex; align-items: center; gap: 8px; padding: 1px 4px 0 6px; border-right: 1px solid #444; }

/* Registry */
.registry {
  position: relative;
  flex: 1;
  min-height: 0;
  background: #d5d5d5;
  border: solid #555;
  border-width: 0 2px;
  border-bottom: 2px solid #333;
}

.searchbar {
  display: flex;
  align-items: center;
  height: 36px;
  gap: 2px;
  padding: 0 2px 0 4px;
  background: #5f5d5b;
}

.kind {
  width: 113px; height: 20px;
  margin-right: auto;
  padding: 0 4px;
  border: 1px solid #4b4947;
  color: #f3f3f3;
  appearance: none;
  background: url("data:image/svg+xml,%3Csvg xmlns='http://www.w3.org/2000/svg' width='8' height='4'%3E%3Cpath d='M0 0H8L4 4Z' fill='%23d5d5d5'/%3E%3C/svg%3E") 96px 7px no-repeat;
}

.find { width: 173px; height: 16px; padding: 0 2px; background: #d5d5d5; border: 1px solid #444; }
.find::placeholder { color: #9a9896; }
.go { width: 52px; height: 16px; line-height: 14px; background: #d5d5d5; border: 1px solid #444; }

.grid { width: 100%; table-layout: fixed; border-collapse: separate; border-spacing: 0; }
.grid th {
  height: 18px;
  padding: 0 3px;
  background: #5f5d5b;
  color: #f3f3f3;
  font-weight: normal;
  text-align: left;
  white-space: nowrap;
  border: solid #444;
  border-width: 1px 1px 1px 0;
}
.grid td {
  height: 16px;
  padding: 1px 2px 0;
  line-height: 14px;
  white-space: nowrap;
  background: #d5d5d5;
  border: solid #9a9896;
  border-width: 0 1px 1px 0;
}
.grid td:first-child { border-bottom: none; background: #d5d5d5; }
.grid .mark { padding: 0 6px; }
.main-grid .filter td { height: 16px; border-bottom: 1px solid #444; }

.c19 { width: 19px; } .c262 { width: 262px; } .c60 { width: 60px; } .c58 { width: 58px; }
.c128 { width: 128px; } .c103 { width: 103px; } .c112 { width: 112px; } .c115 { width: 115px; }
.c97 { width: 97px; } .c106 { width: 106px; } .c107 { width: 107px; } .c78 { width: 78px; }
.c79 { width: 79px; } .c117 { width: 117px; } .c95 { width: 95px; } .c90 { width: 90px; }
.c59 { width: 59px; } .c62 { width: 62px; } .c63 { width: 63px; }

.abc { display: flex; align-items: center; font-size: 6px; line-height: 9px; padding-left: 1px; font-weight: bold; }
.abc i { width: 6px; height: 9px; border: 2px solid #1f9a45; background: #fff; }
.eq { display: block; width: 8px; height: 3px; margin-left: 4px; background: #777; }
.grid .mid { text-align: center; line-height: 0; }
.tri-check { appearance: none; width: 12px; height: 12px; border: 1px solid #444; background: #444 content-box; padding: 2px; }
.grid .mark svg { margin-left: -1px; }

.tri { float: right; width: 0; height: 0; margin-top: 4px; border: 4px solid transparent; border-top-color: #d5d5d5; border-bottom: none; }
.tri.up { border-top: none; border-bottom: 4px solid #d5d5d5; margin-right: 2px; }
.tri.small { float: none; display: block; margin: 0; border-width: 3px; border-top-color: #666; border-bottom: none; }
.tri.small.up { border-top: none; border-bottom: 3px solid #8b8987; }
.cur { display: block; width: 0; height: 0; margin-left: 2px; border: 3px solid transparent; border-left: 4px solid #555; border-right: none; }

.grid .grp td { height: 20px; background: #404040; color: #fff; font-weight: bold; line-height: 18px; border-bottom-color: #777; }
.grid .grp td:first-child { background: #d5d5d5; }
.grp svg { float: left; margin: 4px 7px 0 4px; }
.grid .num { text-align: right; }
.grid .low { background: #dfffff; }
.grid .low svg { float: left; margin: 1px 3px 0 1px; }
.grid .rest { background: #90ee90; }

.assist { position: absolute; right: 11px; bottom: 11px; width: 46px; height: 46px; border-radius: 50%; background: #5f5d5b; overflow: hidden; }

.statusbar {
  display: flex;
  align-items: center;
  gap: 4px;
  height: 19px;
  flex: none;
  padding: 0 8px;
  background: #bfbab7;
  border-bottom: 1px solid #777;
}
.user { margin-left: auto; }

/* Windows */
.window { position: absolute; background: #5f5d5b; color: #f3f3f3; }
.wintitle { display: flex; align-items: center; height: 25px; padding-left: 6px; gap: 4px; color: #9a9896; }
.wintitle span { flex: 1; }
.wintitle button { width: 38px; display: flex; justify-content: center; color: #b5b3b1; }

.card {
  left: 420px; right: 20px; top: 219px; bottom: 111px;
  display: flex;
  flex-direction: column;
  border: 1px solid #777;
}

.toolbar { display: flex; height: 21px; background: #bfbab7; border-top: 1px solid #9a9896; flex: none; }
.toolbar button { width: 28px; display: flex; align-items: center; justify-content: center; }
.toolbar .pressed { background: #8b8987; }
.cardtabs { display: flex; height: 18px; flex: none; }
.cardtabs button { padding: 1px 3px 0 4px; border-right: 1px solid #444; white-space: nowrap; }
.cardtabs .active { border-color: #777; }
.sheet { flex: 1; background: #d5d5d5; color: #1d1d1d; border-left: 1px solid #555; border-right: 1px solid #333; border-bottom: 2px solid #555; }
.cardstatus { display: flex; justify-content: space-between; align-items: center; height: 19px; padding: 0 2px; background: #bfbab7; color: #1d1d1d; font-size: 10px; }

.dialog { left: 735px; top: 377px; width: 298px; padding-bottom: 7px; border: 1px solid #6d6b69; }
.fields {
  display: grid;
  grid-template-columns: 114px 97px;
  grid-auto-rows: 15px;
  gap: 10px 9px;
  padding-top: 10px;
  text-align: right;
}
.fields label { line-height: 17px; }
.box { display: flex; align-items: center; height: 15px; background: #d5d5d5; color: #1d1d1d; border: 1px solid #444; }
.box input { flex: 1; min-width: 0; text-align: center; }
.box button { width: 12px; display: flex; justify-content: center; }
.dots { width: 7px; height: 2px; background: repeating-linear-gradient(90deg, #333 0 2px, transparent 2px 3px); }
.above { display: block; margin: 6px 10px 5px; }
.goal { margin: 0 9px; }
.above.info { margin: 9px 9px 5px; }
.memo { display: flex; height: 87px; margin: 0 9px; border: 1px solid #444; }
.memo textarea { flex: 1; background: #d5d5d5; resize: none; color: #1d1d1d; }
.scroll { width: 14px; display: flex; flex-direction: column; justify-content: space-between; }
.scroll button { height: 14px; display: flex; align-items: center; justify-content: center; background: #bfbab7; }
.submit { display: block; width: calc(100% - 18px); height: 60px; margin: 6px 9px 8px; background: #d5d5d5; color: #1d1d1d; border: 1px solid #444; font: 28px "Liberation Sans", sans-serif; }
.record { margin: 0 9px; border: 1px solid #4b4947; }
.record h2 { height: 18px; padding-left: 9px; background: #404040; font-size: 9px; line-height: 18px; }
.record dl { display: grid; grid-template-columns: 75px 1fr; grid-auto-rows: 19px; gap: 0 8px; line-height: 21px; }
.record dt { text-align: right; white-space: nowrap; }

/* Taskbar */
.taskbar {
  position: relative;
  display: flex;
  align-items: center;
  height: 40px;
  flex: none;
  color: #fff;
  font: 10px/13px "Noto Sans", sans-serif;
  background: linear-gradient(90deg, #1c222d 0, #1b212e 22%, #14205a 27%, #121f58 48%, #1b2144 54%, #13205a 62%, #1e2128 66%, #1b212d 100%);
}
.weather { display: flex; align-items: center; gap: 7px; width: 309px; padding-left: 17px; }
.weather b, .weather span { display: block; font-weight: normal; }
.apps { display: flex; align-items: center; height: 100%; }
.apps button { position: relative; width: 37px; height: 100%; display: flex; align-items: center; justify-content: center; }
.run::after { content: ""; position: absolute; bottom: 4px; width: 5px; height: 3px; border-radius: 2px; background: #9a9eae; }
.run.active::after { width: 20px; background: #f59a9f; }
.search {
  display: flex;
  align-items: center;
  width: 186px; height: 27px;
  margin: 0 2px 0 4px;
  padding: 0 4px 0 9px;
  border-radius: 14px;
  border: 1px solid #3f4c7c;
  background: #2b3969;
}
.search input { flex: 1; min-width: 0; padding-left: 8px; font-size: 11px; }
.search input::placeholder { color: #dfe3f0; }
.badge { position: absolute; left: 19px; top: 6px; width: 13px; height: 13px; border-radius: 50%; background: #2b2b2b; font-size: 8px; line-height: 13px; text-align: center; }
.tray { display: flex; align-items: center; margin-left: auto; padding-right: 17px; gap: 7px; }
.lang { margin: 0 8px 0 10px; }
.clock { margin-left: 5px; text-align: right; }
.clock span { display: block; }
```
